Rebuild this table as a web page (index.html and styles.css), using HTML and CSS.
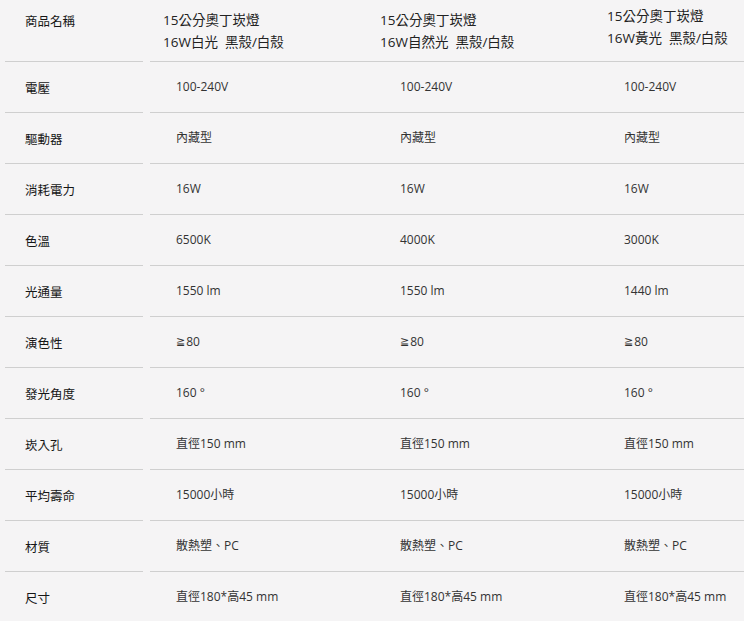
FILE: index.html
```html
<!DOCTYPE html>
<html lang="zh-Hant">
<head>
<meta charset="utf-8">
<title>15公分奧丁崁燈 規格</title>
<link rel="stylesheet" href="styles.css">
</head>
<body>
<div class="spec">
  <div class="row row-head">
    <div class="label label-head">商品名稱</div>
    <div class="vals">
      <div class="head h1">15公分奧丁崁燈<br>16W白光&nbsp; 黑殼/白殼</div>
      <div class="head h2">15公分奧丁崁燈<br>16W自然光&nbsp; 黑殼/白殼</div>
      <div class="head h3">15公分奧丁崁燈<br>16W黃光&nbsp; 黑殼/白殼</div>
    </div>
  </div>
  <div class="row">
    <div class="label">電壓</div>
    <div class="vals"><div class="cell">100-240V</div><div class="cell">100-240V</div><div class="cell">100-240V</div></div>
  </div>
  <div class="row">
    <div class="label">驅動器</div>
    <div class="vals"><div class="cell">內藏型</div><div class="cell">內藏型</div><div class="cell">內藏型</div></div>
  </div>
  <div class="row">
    <div class="label">消耗電力</div>
    <div class="vals"><div class="cell">16W</div><div class="cell">16W</div><div class="cell">16W</div></div>
  </div>
  <div class="row">
    <div class="label">色溫</div>
    <div class="vals"><div class="cell">6500K</div><div class="cell">4000K</div><div class="cell">3000K</div></div>
  </div>
  <div class="row">
    <div class="label">光通量</div>
    <div class="vals"><div class="cell">1550 lm</div><div class="cell">1550 lm</div><div class="cell">1440 lm</div></div>
  </div>
  <div class="row">
    <div class="label">演色性</div>
    <div class="vals"><div class="cell"><span class="ge">≧</span>80</div><div class="cell"><span class="ge">≧</span>80</div><div class="cell"><span class="ge">≧</span>80</div></div>
  </div>
  <div class="row">
    <div class="label">發光角度</div>
    <div class="vals"><div class="cell">160 °</div><div class="cell">160 °</div><div class="cell">160 °</div></div>
  </div>
  <div class="row">
    <div class="label">崁入孔</div>
    <div class="vals"><div class="cell">直徑150 mm</div><div class="cell">直徑150 mm</div><div class="cell">直徑150 mm</div></div>
  </div>
  <div class="row">
    <div class="label">平均壽命</div>
    <div class="vals"><div class="cell">15000小時</div><div class="cell">15000小時</div><div class="cell">15000小時</div></div>
  </div>
  <div class="row">
    <div class="label">材質</div>
    <div class="vals"><div class="cell">散熱塑、PC</div><div class="cell">散熱塑、PC</div><div class="cell">散熱塑、PC</div></div>
  </div>
  <div class="row">
    <div class="label">尺寸</div>
    <div class="vals"><div class="cell">直徑180*高45 mm</div><div class="cell">直徑180*高45 mm</div><div class="cell">直徑180*高45 mm</div></div>
  </div>
</div>
</body>
</html>
```
FILE: styles.css
```css
html, body {
  margin: 0;
  padding: 0;
  background: #f5f4f5;
  overflow: hidden;
}

body {
  font-family: "Open Sans", "Noto Sans CJK TC", sans-serif;
  color: #333;
}

.spec {
  width: 830px;
}

.row {
  display: flex;
  height: 51px;
}

.row-head {
  height: 62px;
}

.label {
  flex: none;
  width: 118px;
  margin-left: 5px;
  padding-left: 20px;
  border-bottom: 1px solid #cfcfcf;
  display: flex;
  align-items: center;
  font-family: "Noto Sans CJK TC", sans-serif;
  font-size: 12.5px;
  color: #161616;
}

.label-head {
  align-items: flex-start;
  padding-top: 12px;
  line-height: 18px;
}

.vals {
  flex: none;
  margin-left: 7px;
  width: 672px;
  display: grid;
  grid-template-columns: 224px 224px 224px;
  border-bottom: 1px solid #cfcfcf;
}

.cell {
  display: flex;
  align-items: center;
  padding-left: 26px;
  font-size: 12px;
  line-height: 16px;
  color: #333;
}

.ge {
  font-family: "DejaVu Sans", sans-serif;
  font-size: 11px;
  margin-right: 1px;
}

.head {
  font-size: 13.5px;
  line-height: 22px;
  color: #222;
}

.h1 { padding: 9px 0 0 13px; }
.h2 { padding: 9px 0 0 6px; }
.h3 { padding: 5px 0 0 9px; }
```
